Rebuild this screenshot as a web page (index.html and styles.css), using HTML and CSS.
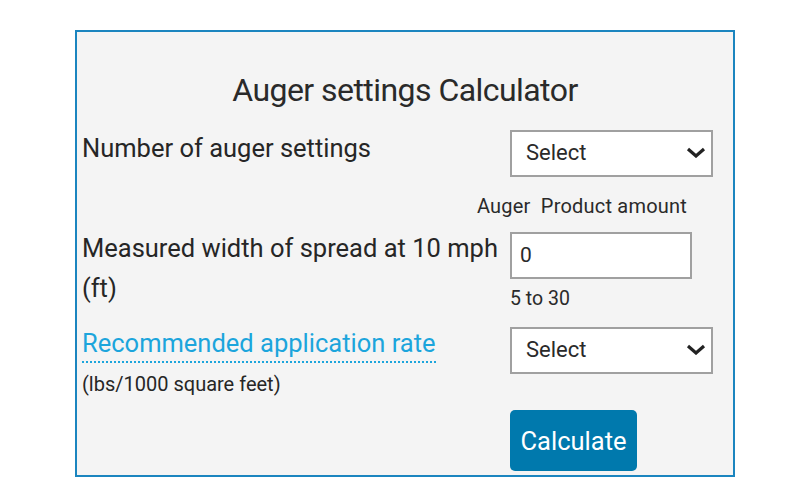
FILE: index.html
```html
<!DOCTYPE html>
<html lang="en">
<head>
    <meta charset="UTF-8">
    <meta name="viewport" content="width=device-width, initial-scale=1.0">
    <title>Auger settings Calculator</title>
    <link rel="stylesheet" href="styles.css">
</head>
<body>
    <div class="calculator">
        <h2 class="calc-title">Auger settings Calculator</h2>

        <div class="calc-row row-augers">
            <div class="calc-label">Number of auger settings</div>
            <div class="calc-control">
                <div class="select-box">
                    <span>Select</span>
                    <svg class="chevron" viewBox="0 0 20 11" width="20" height="11">
                        <path d="M2 2 L10 9 L18 2" fill="none" stroke="#222" stroke-width="3.2"/>
                    </svg>
                </div>
            </div>
        </div>

        <div class="calc-sub">Auger&nbsp; Product amount</div>

        <div class="calc-row row-width">
            <div class="calc-label">Measured width of spread at 10 mph (ft)</div>
            <div class="calc-control">
                <div class="text-box">0</div>
                <div class="hint">5 to 30</div>
            </div>
        </div>

        <div class="calc-row row-rate">
            <div class="calc-label">
                <span class="link-label">Recommended application rate</span>
                <div class="unit">(lbs/1000 square feet)</div>
            </div>
            <div class="calc-control">
                <div class="select-box">
                    <span>Select</span>
                    <svg class="chevron" viewBox="0 0 20 11" width="20" height="11">
                        <path d="M2 2 L10 9 L18 2" fill="none" stroke="#222" stroke-width="3.2"/>
                    </svg>
                </div>
            </div>
        </div>

        <div class="calc-row row-action">
            <div></div>
            <div class="calc-control">
                <button class="calc-btn">Calculate</button>
            </div>
        </div>
    </div>
</body>
</html>
```

FILE: styles.css
```css
body {
    margin: 0;
    background: #fff;
    font-family: Roboto, "Liberation Sans", sans-serif;
    color: #2a2a2a;
}

.calculator {
    width: 660px;
    height: 447px;
    margin: 30px 0 0 75px;
    border: 2px solid #1b85bf;
    background: #f4f4f4;
    padding: 0 20px 0 5px;
    box-sizing: border-box;
}

.calc-title {
    margin: 0 -20px 0 -5px;
    padding-top: 38px;
    text-align: center;
    font-size: 32px;
    font-weight: 400;
    letter-spacing: -0.55px;
    line-height: 40px;
    color: #2a2a2a;
}

.calc-row {
    display: grid;
    grid-template-columns: 428px 203px;
    align-items: start;
}

.calc-label {
    font-size: 25.5px;
    line-height: 40px;
    color: #262626;
}

.row-augers {
    margin-top: 18px;
}

.row-augers .calc-control {
    margin-top: 2px;
}

.select-box {
    height: 47px;
    box-sizing: border-box;
    border: 2px solid #a0a0a0;
    background: #fff;
    display: flex;
    align-items: center;
    justify-content: space-between;
    padding: 0 5px 2px 14px;
    font-size: 22px;
    color: #2a2a2a;
}

.calc-sub {
    text-align: right;
    padding-right: 26px;
    font-size: 20px;
    letter-spacing: 0.2px;
    line-height: 24px;
    margin-top: 17px;
}

.row-width {
    margin-top: 10px;
}

.row-width .calc-control {
    margin-top: 4px;
}

.text-box {
    width: 182px;
    height: 47px;
    box-sizing: border-box;
    border: 2px solid #a0a0a0;
    background: #fff;
    padding: 0 8px;
    font-size: 21px;
    line-height: 43px;
}

.hint {
    font-size: 19.5px;
    line-height: 22px;
    margin-top: 9px;
}

.row-rate {
    margin-top: 13px;
}

.row-rate .calc-control {
    margin-top: 4px;
}

.link-label {
    color: #1ca5dc;
    border-bottom: 2px dotted #1ca5dc;
    padding-bottom: 3px;
}

.unit {
    font-size: 20px;
    line-height: 22px;
    margin-top: 10px;
}

.row-action {
    margin-top: 15px;
}

.calc-btn {
    width: 127px;
    height: 61px;
    border: none;
    border-radius: 5px;
    background: #0079ad;
    color: #fff;
    font-family: inherit;
    font-size: 25.5px;
    cursor: pointer;
}
```
